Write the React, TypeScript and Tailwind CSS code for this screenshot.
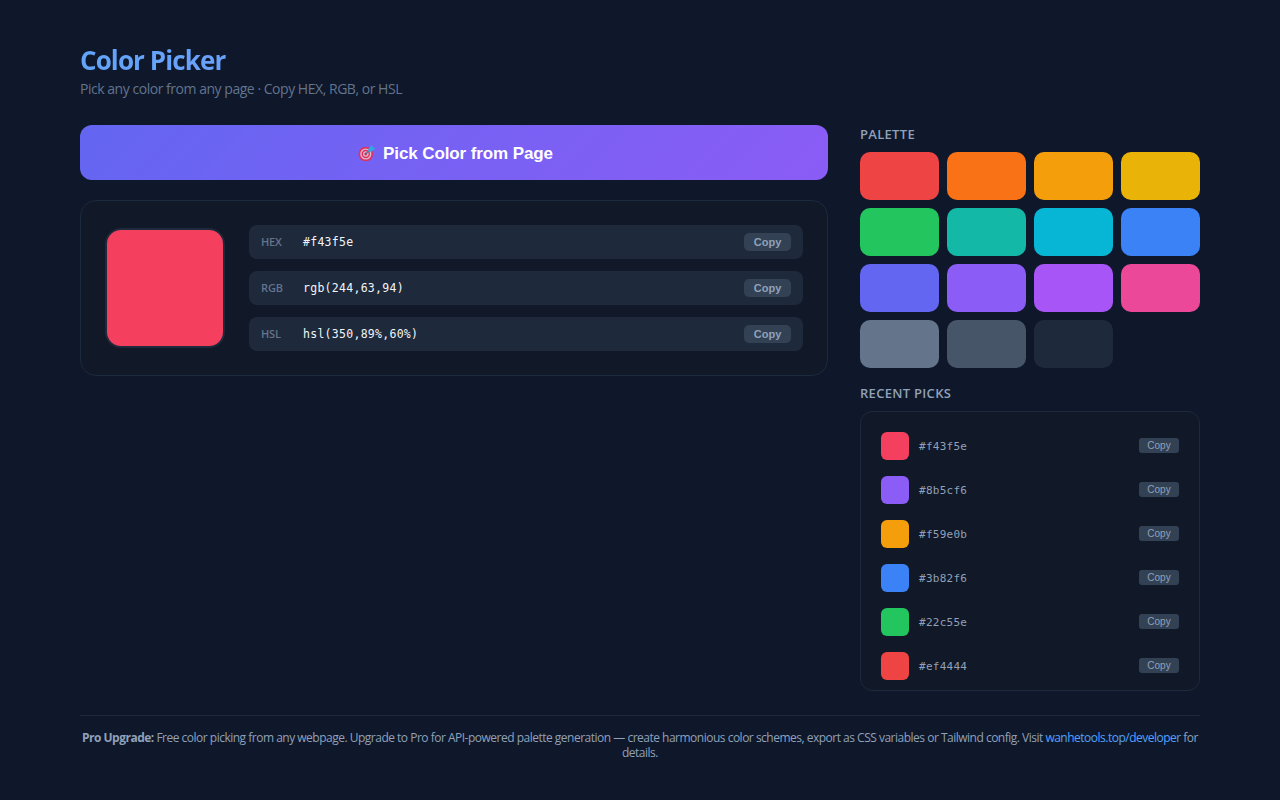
import { FC, ReactNode } from 'react';

const palette = [
  '#ef4444', '#f97316', '#f59e0b', '#eab308',
  '#22c55e', '#14b8a6', '#06b6d4', '#3b82f6',
  '#6366f1', '#8b5cf6', '#a855f7', '#ec4899',
  '#64748b', '#475569', '#1e293b', '#0f172a',
];

const recentPicks = ['#f43f5e', '#8b5cf6', '#f59e0b', '#3b82f6', '#22c55e', '#ef4444'];

const formats = [
  { label: 'HEX', value: '#f43f5e' },
  { label: 'RGB', value: 'rgb(244,63,94)' },
  { label: 'HSL', value: 'hsl(350,89%,60%)' },
];

const copy = (value: string) => {
  navigator.clipboard?.writeText(value);
};

const TargetIcon: FC = () => (
  <svg width="18" height="18" viewBox="0 0 18 18" fill="none" className="mb-0.5 shrink-0">
    <circle cx="7.8" cy="10" r="7.3" fill="#e0325c" />
    <circle cx="7.8" cy="10" r="5.6" fill="#d9b9d3" />
    <circle cx="7.8" cy="10" r="4.2" fill="#e0325c" />
    <circle cx="7.8" cy="10" r="2.8" fill="#d9b9d3" />
    <circle cx="7.8" cy="10" r="1.4" fill="#d42d55" />
    <path d="M7.9 9.9 12.6 5.3" stroke="#54708f" strokeWidth="1.3" />
    <path d="M10.3 4.7 14 .9l.8 2.3 2.8.7-3.7 3.6-3.3.4z" fill="#35a5e3" />
  </svg>
);

const SectionTitle: FC<{ children: ReactNode }> = ({ children }) => (
  <h2 className="text-[13px] leading-[18px] font-semibold uppercase tracking-[0.3px] text-slate-400">
    {children}
  </h2>
);

export default function App() {
  return (
    <div className="min-h-screen bg-[#0f172a] px-20 pt-10 font-['Open_Sans','Noto_Sans',sans-serif] text-slate-200">
      <header className="h-[85px]">
        <h1 className="bg-[linear-gradient(135deg,#60a5fa,#a78bfa)] bg-clip-text pt-[3px] text-[26px] leading-[35px] font-bold tracking-[-0.9px] text-transparent">
          Color Picker
        </h1>
        <p className="mt-0.5 text-sm leading-[18px] tracking-[-0.47px] text-slate-500">
          Pick any color from any page · Copy HEX, RGB, or HSL
        </p>
      </header>

      <main className="grid h-[566px] grid-cols-[1fr_340px] gap-8">
        <div>
          <button className="flex h-[55px] w-full items-center justify-center gap-[7px] rounded-xl bg-[linear-gradient(135deg,#6366f1,#8b5cf6)] pt-0.5 pl-[3px] font-['Liberation_Sans',sans-serif] text-[17px] font-bold tracking-[-0.1px] text-white">
            <TargetIcon />
            <span>Pick Color from Page</span>
          </button>

          <div className="mt-5 flex items-center gap-6 rounded-2xl border border-slate-800 bg-[#111827] p-6">
            <div className="size-[120px] shrink-0 rounded-2xl border-2 border-[#1e293b] bg-[#f43f5e]" />
            <div className="flex flex-1 flex-col gap-3">
              {formats.map(({ label, value }) => (
                <div key={label} className="flex h-[34px] items-center rounded-lg bg-[#1e293b] px-3">
                  <span className="w-[42px] text-[11px] font-semibold tracking-[-0.15px] text-slate-500">{label}</span>
                  <span className="flex-1 pt-0.5 font-['DejaVu_Sans_Mono',monospace] text-[11.5px] tracking-[0.28px] text-slate-100">
                    {value}
                  </span>
                  <button
                    onClick={() => copy(value)}
                    className="h-[18px] w-[47px] rounded-[5px] bg-[#334155] font-['Liberation_Sans',sans-serif] text-[11px] leading-[18px] font-bold text-slate-400"
                  >
                    Copy
                  </button>
                </div>
              ))}
            </div>
          </div>
        </div>

        <aside>
          <SectionTitle>Palette</SectionTitle>
          <div className="mt-[9px] grid grid-cols-4 gap-2">
            {palette.map((color) => (
              <button
                key={color}
                onClick={() => copy(color)}
                className="h-12 rounded-[10px]"
                style={{ backgroundColor: color }}
              />
            ))}
          </div>

          <div className="mt-4">
            <SectionTitle>Recent Picks</SectionTitle>
          </div>
          <div className="mt-[9px] h-[280px] rounded-xl border border-slate-800 bg-[#111827] px-5 pt-3">
            {recentPicks.map((color) => (
              <div key={color} className="flex h-11 items-center gap-2.5">
                <div className="size-7 rounded-md" style={{ backgroundColor: color }} />
                <span className="flex-1 pt-0.5 font-['DejaVu_Sans_Mono',monospace] text-[11px] tracking-[0.26px] text-slate-400">
                  {color}
                </span>
                <button
                  onClick={() => copy(color)}
                  className="mb-px h-[15px] w-10 rounded-[3px] bg-[#334155] font-['Liberation_Sans',sans-serif] text-[10px] leading-[15px] text-slate-400"
                >
                  Copy
                </button>
              </div>
            ))}
          </div>
        </aside>
      </main>

      <footer className="mt-6 border-t border-slate-800 pt-3.5 text-center text-xs leading-[15px] tracking-[-0.5px] whitespace-nowrap text-slate-400">
        <strong>Pro Upgrade:</strong> Free color picking from any webpage. Upgrade to Pro for API-powered
        palette generation — create harmonious color schemes, export as CSS variables or Tailwind config.
        Visit <a className="text-blue-400">wanhetools.top/developer</a> for
        <br />
        details.
      </footer>
    </div>
  );
}
